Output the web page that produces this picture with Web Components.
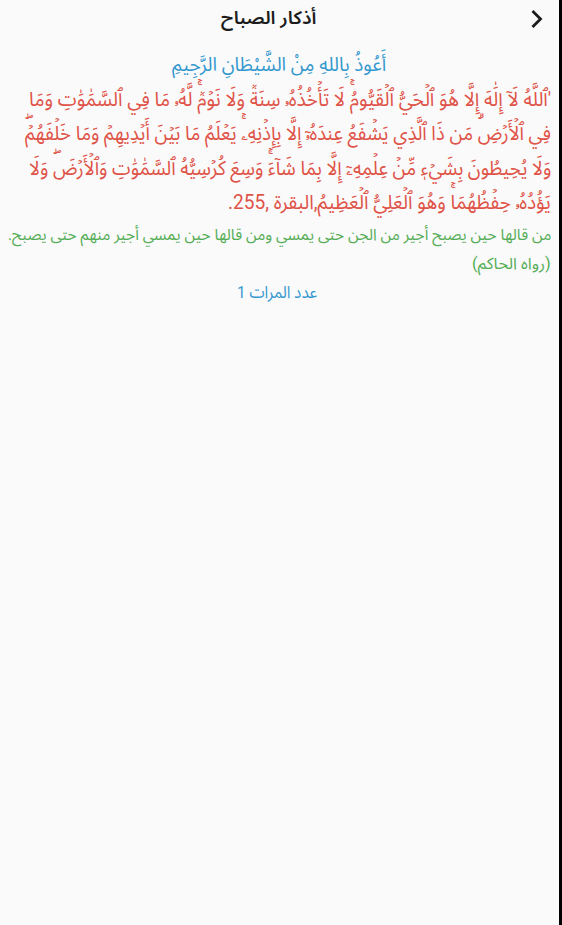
<!DOCTYPE html>
<html lang="ar" dir="rtl">
<head>
<meta charset="utf-8">
<title>أذكار الصباح</title>
<style>
    body {
        margin: 0;
        background: #fafafa;
        font-family: Roboto, "Noto Sans Arabic", "Noto Sans Arabic UI", "Noto Naskh Arabic UI", "DejaVu Sans", sans-serif;
    }
</style>
</head>
<body>
<zikr-screen>
    <app-header slot="header">أذكار الصباح</app-header>
    <zikr-card>
        <text-line slot="opening" width="214">أَعُوذُ بِاللهِ مِنْ الشَّيْطَانِ الرَّجِيمِ</text-line>
        <text-line slot="verse" width="522">'ٱللَّهُ لَآ إِلَٰهَ إِلَّا هُوَ ٱلۡحَيُّ ٱلۡقَيُّومُۚ لَا تَأۡخُذُهُۥ سِنَةٞ وَلَا نَوۡمٞۚ لَّهُۥ مَا فِي ٱلسَّمَٰوَٰتِ وَمَا</text-line>
        <text-line slot="verse" width="526">فِي ٱلۡأَرۡضِۗ مَن ذَا ٱلَّذِي يَشۡفَعُ عِندَهُۥٓ إِلَّا بِإِذۡنِهِۦۚ يَعۡلَمُ مَا بَيۡنَ أَيۡدِيهِمۡ وَمَا خَلۡفَهُمۡۖ</text-line>
        <text-line slot="verse" width="522">وَلَا يُحِيطُونَ بِشَيۡءٖ مِّنۡ عِلۡمِهِۦٓ إِلَّا بِمَا شَآءَۚ وَسِعَ كُرۡسِيُّهُ ٱلسَّمَٰوَٰتِ وَٱلۡأَرۡضَۖ وَلَا</text-line>
        <text-line slot="verse" width="323">يَؤُدُهُۥ حِفۡظُهُمَاۚ وَهُوَ ٱلۡعَلِيُّ ٱلۡعَظِيمُ,البقرة ,255.</text-line>
        <text-line slot="note" width="543">من قالها حين يصبح أجير من الجن حتى يمسي ومن قالها حين يمسي أجير منهم حتى يصبح.</text-line>
        <text-line slot="note" width="79">(رواه الحاكم)</text-line>
        <text-line slot="count" width="80">عدد المرات 1</text-line>
    </zikr-card>
</zikr-screen>

<script>
class ZikrScreen extends HTMLElement {
    constructor() {
        super();
        this.attachShadow({ mode: "open" });
        this.shadowRoot.innerHTML = `
            <style>
                :host {
                    display: flex;
                    flex-direction: column;
                    box-sizing: border-box;
                    height: 925px;
                    overflow: hidden;
                    background: #fafafa;
                    border-right: 3px solid #000;
                }
            </style>
            <slot name="header"></slot>
            <slot></slot>
        `;
    }
}

class AppHeader extends HTMLElement {
    constructor() {
        super();
        this.attachShadow({ mode: "open" });
        this.shadowRoot.innerHTML = `
            <style>
                :host {
                    display: grid;
                    grid-template-columns: 44px 1fr 22px;
                    align-items: center;
                    height: 37px;
                    color: #1c1c1c;
                }
                svg {
                    justify-self: center;
                    display: block;
                }
                text-line {
                    --line: 35px;
                    align-self: start;
                    font-size: 18px;
                    font-weight: 600;
                    justify-self: center;
                }
            </style>
            <svg width="14" height="20" viewBox="0 0 14 20" fill="none" stroke="#1c1c1c" stroke-width="2.8">
                <path d="M2.5 2 L10.5 10 L2.5 18"/>
            </svg>
            <text-line width="95"><slot></slot></text-line>
        `;
    }
}

class ZikrCard extends HTMLElement {
    constructor() {
        super();
        this.attachShadow({ mode: "open" });
        this.shadowRoot.innerHTML = `
            <style>
                :host {
                    display: flex;
                    flex-direction: column;
                    padding: 11px 8px 0;
                }
                div {
                    display: flex;
                    flex-direction: column;
                }
                .opening {
                    --line: 34px;
                    align-items: center;
                    font-size: 19px;
                    color: #3498cf;
                }
                .verse {
                    --line: 34.4px;
                    font-size: 20px;
                    color: #df5348;
                }
                .note {
                    --line: 29px;
                    font-size: 16px;
                    color: #55ad57;
                }
                .count {
                    --line: 29px;
                    align-items: center;
                    padding-right: 4px;
                    font-size: 17px;
                    color: #3498cf;
                }
            </style>
            <div class="opening"><slot name="opening"></slot></div>
            <div class="verse"><slot name="verse"></slot></div>
            <div class="note"><slot name="note"></slot></div>
            <div class="count"><slot name="count"></slot></div>
        `;
    }
}

// One line of text, set to the measure given in its width attribute
class TextLine extends HTMLElement {
    constructor() {
        super();
        this.attachShadow({ mode: "open" });
        this.shadowRoot.innerHTML = `
            <style>
                :host {
                    display: block;
                    height: var(--line, 30px);
                    line-height: var(--line, 30px);
                    white-space: nowrap;
                }
                span {
                    display: inline-block;
                    transform-origin: right center;
                }
            </style>
            <span><slot></slot></span>
        `;
    }

    connectedCallback() {
        requestAnimationFrame(() => this.fit());
    }

    fit() {
        const span = this.shadowRoot.querySelector("span");
        const width = Number(this.getAttribute("width"));
        this.style.width = width + "px";
        span.style.transform = `scaleX(${width / span.offsetWidth})`;
    }
}

customElements.define("text-line", TextLine);
customElements.define("app-header", AppHeader);
customElements.define("zikr-card", ZikrCard);
customElements.define("zikr-screen", ZikrScreen);
</script>
</body>
</html>
